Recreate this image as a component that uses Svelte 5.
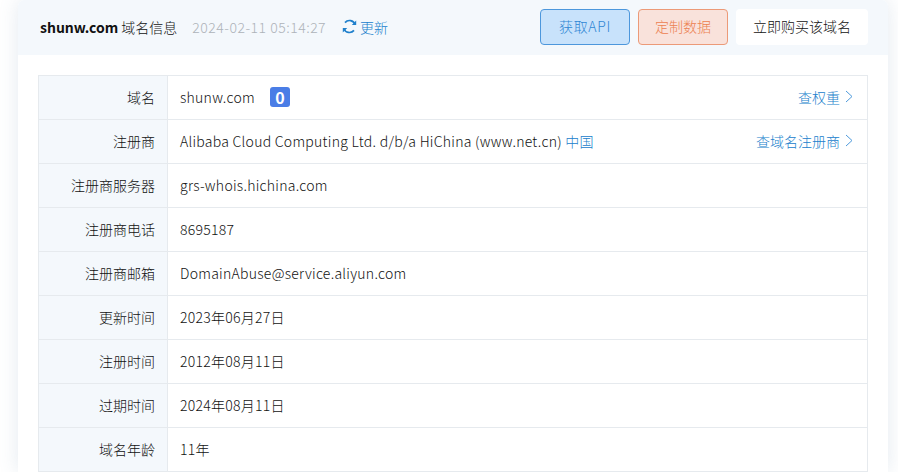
<script>
  const rows = [
    { label: "注册商服务器", value: "grs-whois.hichina.com" },
    { label: "注册商电话", value: "8695187" },
    { label: "注册商邮箱", value: "DomainAbuse@service.aliyun.com" },
    { label: "更新时间", value: "2023年06月27日" },
    { label: "注册时间", value: "2012年08月11日" },
    { label: "过期时间", value: "2024年08月11日" },
    { label: "域名年龄", value: "11年" },
  ];
</script>

{#snippet chevron()}
  <svg class="chevron" width="8" height="13" viewBox="0 0 8 13">
    <path d="M1 1l6 5.5L1 12" fill="none" stroke="#4f9bdc" stroke-width="1" />
  </svg>
{/snippet}

<div class="card">
  <header class="head">
    <div class="title"><b>shunw.com</b><span class="title-rest">域名信息</span></div>
    <span class="time">2024-02-11 05:14:27</span>
    <a class="refresh">
      <svg width="15" height="15" viewBox="0 0 15 15">
        <path d="M13.1 5.6A5.9 5.9 0 0 0 3 3.6M1.9 9.4A5.9 5.9 0 0 0 12 11.4" fill="none" stroke="#2080cc" stroke-width="1.7" />
        <path d="M14.2 1.6v4.4H9.8zM.8 13.4V9h4.4z" fill="#2080cc" />
      </svg>
      更新
    </a>
    <div class="actions">
      <button class="btn api">获取API</button>
      <button class="btn custom">定制数据</button>
      <button class="btn buy">立即购买该域名</button>
    </div>
  </header>

  <div class="body">
    <div class="table">
      <div class="row">
        <div class="label"><span>域名</span></div>
        <div class="value">
          <span>shunw.com</span>
          <span class="badge">0</span>
          <a class="more">查权重 {@render chevron()}</a>
        </div>
      </div>
      <div class="row">
        <div class="label"><span>注册商</span></div>
        <div class="value">
          <span>Alibaba Cloud Computing Ltd. d/b/a HiChina (www.net.cn) <a class="link">中国</a></span>
          <a class="more">查域名注册商 {@render chevron()}</a>
        </div>
      </div>
      {#each rows as row}
        <div class="row">
          <div class="label"><span>{row.label}</span></div>
          <div class="value"><span>{row.value}</span></div>
        </div>
      {/each}
    </div>
  </div>
</div>

<style>
  :global(body) {
    background: #fff;
    font-family: "Noto Sans CJK SC", "Noto Sans", sans-serif;
    font-size: 14px;
    font-weight: 300;
    line-height: 20px;
    color: #111;
    overflow: hidden;
  }
  .card {
    width: 870px;
    margin-left: 18px;
    background: #fff;
    border-radius: 6px 6px 0 0;
    box-shadow: 0 0 20px rgba(90, 125, 160, 0.16);
  }
  .head {
    display: flex;
    align-items: center;
    height: 55px;
    padding: 0 20px 2px 22px;
    box-sizing: border-box;
    background: #f4f8fc;
    border-radius: 6px 6px 0 0;
  }
  .title b {
    font-weight: 700;
  }
  .title-rest {
    margin-left: 3px;
  }
  .time {
    margin-left: 15px;
    color: #aeb3b9;
    letter-spacing: 0.5px;
  }
  .refresh {
    display: flex;
    align-items: center;
    gap: 3px;
    margin-left: 16px;
    color: #2080cc;
  }
  .actions {
    display: flex;
    gap: 8px;
    margin-left: auto;
  }
  .btn {
    height: 36px;
    padding: 0 0 2px;
    box-sizing: border-box;
    border: 1px solid transparent;
    border-radius: 4px;
    font: inherit;
  }
  .api {
    width: 90px;
    background: #c8e2fb;
    border-color: #4d97dc;
    color: #2f86d4;
    letter-spacing: 0.7px;
  }
  .custom {
    width: 90px;
    background: #f9e2db;
    border-color: #ec9a78;
    color: #ec8050;
  }
  .buy {
    width: 132px;
    background: #fff;
    color: #111;
  }
  .body {
    padding: 20px 20px 0;
  }
  .table {
    border: 1px solid #e6eaee;
    border-bottom: 0;
  }
  .row {
    display: flex;
    height: 44px;
    box-sizing: border-box;
    border-bottom: 1px solid #e6eaee;
  }
  .label {
    width: 129px;
    padding: 0 12px 2px 0;
    box-sizing: border-box;
    flex: none;
    display: flex;
    align-items: center;
    justify-content: flex-end;
    background: #f4f8fc;
    border-right: 1px solid #e6eaee;
  }
  .value {
    flex: 1;
    display: flex;
    align-items: center;
    padding: 0 13px 2px 12px;
    letter-spacing: 0.27px;
  }
  .badge {
    display: inline-flex;
    align-items: center;
    justify-content: center;
    width: 20px;
    height: 20px;
    margin-left: 15px;
    background: #4a7de6;
    border-radius: 3px;
    color: #fff;
    font-size: 16px;
    font-weight: 700;
    letter-spacing: 0;
  }
  .more {
    display: flex;
    align-items: center;
    gap: 5px;
    margin-left: auto;
    margin-right: 1px;
    color: #2080cc;
    letter-spacing: 0;
  }
  .link {
    color: #2080cc;
  }
</style>
